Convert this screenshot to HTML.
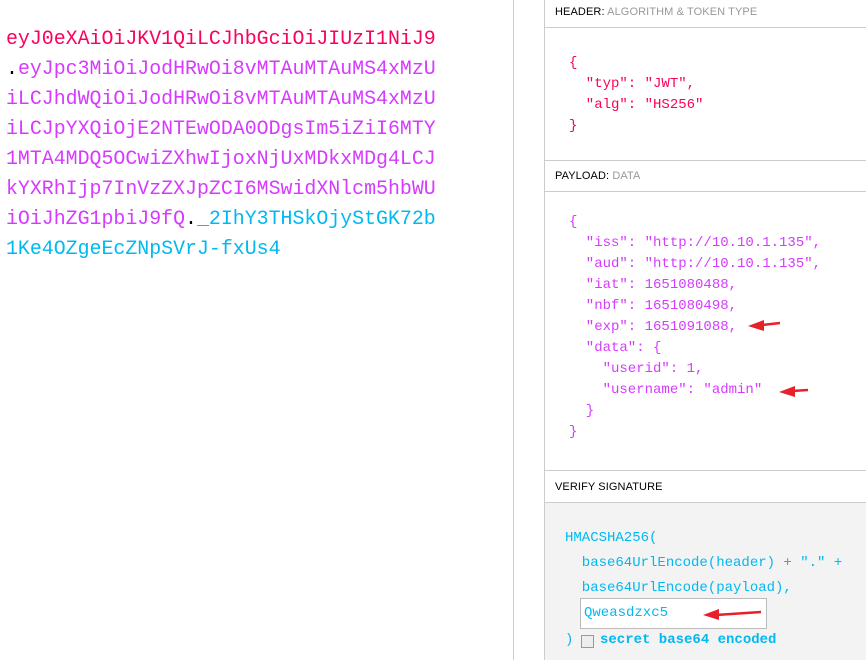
<!DOCTYPE html>
<html><head><meta charset="utf-8"><style>
*{margin:0;padding:0;box-sizing:border-box}
body{width:866px;height:660px;overflow:hidden;background:#fff;position:relative;font-family:"Liberation Sans",sans-serif}
.mono{font-family:"Liberation Mono",monospace}
#tok{position:absolute;left:6px;top:24px;font-size:19.9px;line-height:30px;white-space:pre}
.r{color:#fb015b}.p{color:#d63aff}.c{color:#00b9f1}.k{color:#000}
.vl{position:absolute;top:0;width:1px;height:660px;background:#ccc}
.hl{position:absolute;left:545px;width:321px;height:1px;background:#ccc}
.lab{position:absolute;left:555px;font-size:11px;color:#000;letter-spacing:0.1px}
.lab span{color:#999}
.js{position:absolute;left:569px;font-size:14px;line-height:21px;white-space:pre}
</style></head><body>
<div id="tok" class="mono"><span class="r">eyJ0eXAiOiJKV1QiLCJhbGciOiJIUzI1NiJ9</span>
<span class="k">.</span><span class="p">eyJpc3MiOiJodHRwOi8vMTAuMTAuMS4xMzU</span>
<span class="p">iLCJhdWQiOiJodHRwOi8vMTAuMTAuMS4xMzU</span>
<span class="p">iLCJpYXQiOjE2NTEwODA0ODgsIm5iZiI6MTY</span>
<span class="p">1MTA4MDQ5OCwiZXhwIjoxNjUxMDkxMDg4LCJ</span>
<span class="p">kYXRhIjp7InVzZXJpZCI6MSwidXNlcm5hbWU</span>
<span class="p">iOiJhZG1pbiJ9fQ</span><span class="k">.</span><span class="c">_2IhY3THSkOjyStGK72b</span>
<span class="c">1Ke4OZgeEcZNpSVrJ-fxUs4</span></div>
<div class="vl" style="left:513px"></div>
<div class="vl" style="left:544px"></div>
<div style="position:absolute;left:545px;top:503px;width:321px;height:157px;background:#f3f3f3"></div>
<div class="lab" style="top:6px">HEADER: <span>ALGORITHM &amp; TOKEN TYPE</span></div>
<div class="hl" style="top:27px"></div>
<div class="js mono r" style="top:53px">{
  "typ": "JWT",
  "alg": "HS256"
}</div>
<div class="hl" style="top:160px"></div>
<div class="lab" style="top:170px">PAYLOAD: <span>DATA</span></div>
<div class="hl" style="top:191px"></div>
<div class="js mono p" style="top:212px">{
  "iss": "http://10.10.1.135",
  "aud": "http://10.10.1.135",
  "iat": 1651080488,
  "nbf": 1651080498,
  "exp": 1651091088,
  "data": {
    "userid": 1,
    "username": "admin"
  }
}</div>
<div class="hl" style="top:470px"></div>
<div class="lab" style="top:481px">VERIFY SIGNATURE</div>
<div class="hl" style="top:502px"></div>
<div class="js mono c" style="left:565px;top:526px;line-height:25px">HMACSHA256(
  base64UrlEncode(header) + "." +
  base64UrlEncode(payload),</div>
<div style="position:absolute;left:580px;top:598px;width:187px;height:31px;border:1px solid #bbb;background:#fff"></div>
<div class="mono c" style="position:absolute;left:584px;top:605px;font-size:14px">Qweasdzxc5</div>
<div class="mono c" style="position:absolute;left:565px;top:632px;font-size:14px">)</div>
<div style="position:absolute;left:581px;top:635px;width:13px;height:13px;border:1px solid #999;background:#eee"></div>
<div class="mono c" style="position:absolute;left:600px;top:632px;font-size:14px;font-weight:bold">secret base64 encoded</div>
<svg width="866" height="660" style="position:absolute;left:0;top:0" fill="#e8202a" stroke="#e8202a">
<line x1="780" y1="323" x2="762" y2="325" stroke-width="2.5"/><polygon points="748,326 764,320 764,331" stroke="none"/>
<line x1="808" y1="390" x2="792" y2="391" stroke-width="2.5"/><polygon points="779,392 795,386 795,397" stroke="none"/>
<line x1="761" y1="612" x2="716" y2="615" stroke-width="2.5"/><polygon points="703,615 719,609 719,620" stroke="none"/>
</svg>
</body></html>
